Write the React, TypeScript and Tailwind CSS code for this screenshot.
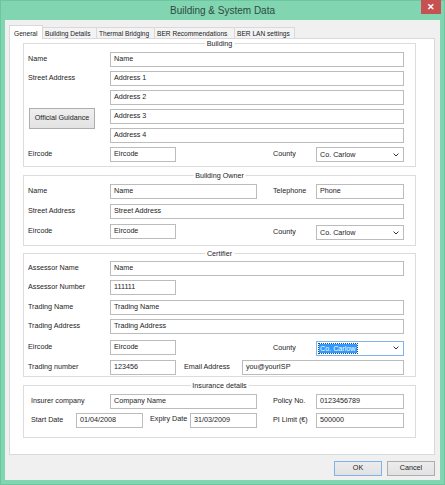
import { ReactNode } from "react";

function TextBox({ value, w = "flex-1" }: { value: string; w?: string }) {
  return (
    <div
      className={`${w} h-[15px] shrink-0 border border-[#bcbcbc] bg-white pl-[3px] pt-[1px] leading-[9px] whitespace-nowrap overflow-hidden`}
    >
      {value}
    </div>
  );
}

function Chevron() {
  return (
    <svg width="6" height="4" viewBox="0 0 6 4" className="shrink-0">
      <path d="M0.6 0.6 L3 3 L5.4 0.6" fill="none" stroke="#333" strokeWidth="1" />
    </svg>
  );
}

function ComboBox({ value, focused = false }: { value: string; focused?: boolean }) {
  return (
    <div
      className={`w-[88px] h-[15px] shrink-0 border bg-white flex items-center pl-[3px] pr-[4px] ${
        focused ? "border-[#7eb4ea]" : "border-[#bcbcbc]"
      }`}
    >
      <span className="flex-1 leading-[9px]">
        {focused ? (
          <span className="bg-[#3399ff] text-white px-[1px] -ml-[1px] outline-1 outline-dotted outline-[#1a4f8a]">
            {value}
          </span>
        ) : (
          value
        )}
      </span>
      <Chevron />
    </div>
  );
}

function Label({ children, w = "w-[82px]" }: { children: ReactNode; w?: string }) {
  return <span className={`${w} shrink-0 whitespace-nowrap`}>{children}</span>;
}

function GroupBox({
  title,
  className,
  children,
}: {
  title: string;
  className: string;
  children: ReactNode;
}) {
  return (
    <div className={`relative border border-[#dcdcdc] ${className}`}>
      <span className="absolute left-1/2 -translate-x-1/2 -top-[5px] leading-[9px] bg-white px-[2px] whitespace-nowrap">
        {title}
      </span>
      {children}
    </div>
  );
}

const tabs = [
  { name: "General", w: "w-[34px]" },
  { name: "Building Details", w: "w-[54px]" },
  { name: "Thermal Bridging", w: "w-[58px]" },
  { name: "BER Recommendations", w: "w-[80px]" },
  { name: "BER LAN settings", w: "w-[60px]" },
];

export default function App() {
  return (
    <div className="w-[445px] h-[485px] bg-[#81d5b1] border border-[#6cc6a0] flex flex-col font-['Liberation_Sans',Arial,sans-serif] text-[7.2px] text-[#1c1c1c]">
      {/* title bar */}
      <div className="h-[19px] grid grid-cols-[1fr_auto_1fr] items-start">
        <div />
        <div className="text-[10px] leading-[19px] text-[#2f4a3f]">Building &amp; System Data</div>
        <div className="flex justify-end pr-[3px] -mt-px">
          <div className="w-[20px] h-[14px] bg-[#c75050] text-white flex items-center justify-center text-[9px] font-bold leading-none">
            ✕
          </div>
        </div>
      </div>

      {/* client area */}
      <div className="mx-[4px] mb-[4px] flex-1 bg-[#f0f0f0] pl-[4px] pr-[5px] pt-[5px] flex flex-col">
        <div className="h-[13px] flex items-end text-[6.6px]">
          {tabs.map((t, i) =>
            i === 0 ? (
              <div
                key={t.name}
                className={`${t.w} h-[14px] -mb-px relative z-10 bg-white border border-b-0 border-[#d9d9d9] pl-[4px] pt-[3px] leading-[9px] whitespace-nowrap`}
              >
                {t.name}
              </div>
            ) : (
              <div
                key={t.name}
                className={`${t.w} h-[11px] bg-[#f3f3f3] border-t border-r border-[#d9d9d9] pl-[2px] pt-[1px] leading-[9px] whitespace-nowrap overflow-hidden`}
              >
                {t.name}
              </div>
            )
          )}
        </div>

        {/* tab panel */}
        <div className="h-[417px] bg-white border border-[#d9d9d9] pl-[13px] pt-[4px] flex flex-col">
          <GroupBox title="Building" className="w-[393px] h-[124px] pt-[8px] pl-[4px] pr-[11px]">
            <div className="grid grid-cols-[82px_1fr] auto-rows-[15px] gap-y-[4px] items-center">
              <Label>Name</Label>
              <TextBox value="Name" />
              <Label>Street Address</Label>
              <TextBox value="Address 1" />
              <span />
              <TextBox value="Address 2" />
              <div className="row-span-2 self-start -mt-[1px] pl-[1px]">
                <div className="w-[66px] h-[21px] border border-[#adadad] bg-gradient-to-b from-[#efefef] to-[#e3e3e3] flex items-center justify-center">
                  Official Guidance
                </div>
              </div>
              <TextBox value="Address 3" />
              <TextBox value="Address 4" />
              <Label>Eircode</Label>
              <div className="flex items-center">
                <TextBox value="Eircode" w="w-[66px]" />
                <span className="ml-auto w-[43px]">County</span>
                <ComboBox value="Co. Carlow" />
              </div>
            </div>
          </GroupBox>

          <GroupBox title="Building Owner" className="mt-[8px] w-[393px] h-[71px] pt-[8px] pl-[4px] pr-[11px]">
            <div className="flex flex-col gap-[4.5px]">
              <div className="flex items-center">
                <Label>Name</Label>
                <TextBox value="Name" w="w-[147px]" />
                <span className="ml-auto w-[43px]">Telephone</span>
                <TextBox value="Phone" w="w-[88px]" />
              </div>
              <div className="flex items-center">
                <Label>Street Address</Label>
                <TextBox value="Street Address" />
              </div>
              <div className="flex items-center">
                <Label>Eircode</Label>
                <TextBox value="Eircode" w="w-[66px]" />
                <span className="ml-auto w-[43px] mt-[2px]">County</span>
                <div className="mt-[2px]">
                  <ComboBox value="Co. Carlow" />
                </div>
              </div>
            </div>
          </GroupBox>

          <GroupBox title="Certifier" className="mt-[7px] w-[393px] h-[124px] pt-[7px] pl-[4px] pr-[11px]">
            <div className="flex flex-col gap-[4.4px]">
              <div className="flex items-center">
                <Label>Assessor Name</Label>
                <TextBox value="Name" />
              </div>
              <div className="flex items-center">
                <Label>Assessor Number</Label>
                <TextBox value="111111" w="w-[66px]" />
              </div>
              <div className="flex items-center">
                <Label>Trading Name</Label>
                <TextBox value="Trading Name" />
              </div>
              <div className="flex items-center">
                <Label>Trading Address</Label>
                <TextBox value="Trading Address" />
              </div>
              <div className="flex items-center">
                <Label>Eircode</Label>
                <TextBox value="Eircode" w="w-[66px]" />
                <span className="ml-auto w-[43px] mt-[2px]">County</span>
                <div className="mt-[2px]">
                  <ComboBox value="Co. Carlow" focused />
                </div>
              </div>
              <div className="flex items-center">
                <Label>Trading number</Label>
                <TextBox value="123456" w="w-[66px]" />
                <span className="ml-[8px] w-[59px]">Email Address</span>
                <TextBox value="you@yourISP" w="w-[162px]" />
              </div>
            </div>
          </GroupBox>

          <GroupBox title="Insurance details" className="mt-[8px] w-[393px] h-[53px] pt-[8px] pl-[7px] pr-[11px]">
            <div className="flex flex-col gap-[4px]">
              <div className="flex items-center">
                <Label w="w-[79px]">Insurer company</Label>
                <TextBox value="Company Name" w="w-[147px]" />
                <span className="ml-auto w-[43px]">Policy No.</span>
                <TextBox value="0123456789" w="w-[88px]" />
              </div>
              <div className="flex items-center">
                <Label w="w-[45px]">Start Date</Label>
                <TextBox value="01/04/2008" w="w-[67px]" />
                <span className="ml-[7px] w-[40px] -mt-[2px]">Expiry Date</span>
                <TextBox value="31/03/2009" w="w-[67px]" />
                <span className="ml-auto w-[43px]">PI Limit (€)</span>
                <TextBox value="500000" w="w-[88px]" />
              </div>
            </div>
          </GroupBox>
        </div>

        {/* dialog buttons */}
        <div className="mt-[6px] flex justify-end gap-[5px]">
          <div className="w-[48px] h-[15px] border border-[#7eb4ea] bg-gradient-to-b from-[#ececec] to-[#e2e2e2] flex items-center justify-center">
            OK
          </div>
          <div className="w-[48px] h-[15px] border border-[#adadad] bg-gradient-to-b from-[#ececec] to-[#e2e2e2] flex items-center justify-center">
            Cancel
          </div>
        </div>
      </div>
    </div>
  );
}
